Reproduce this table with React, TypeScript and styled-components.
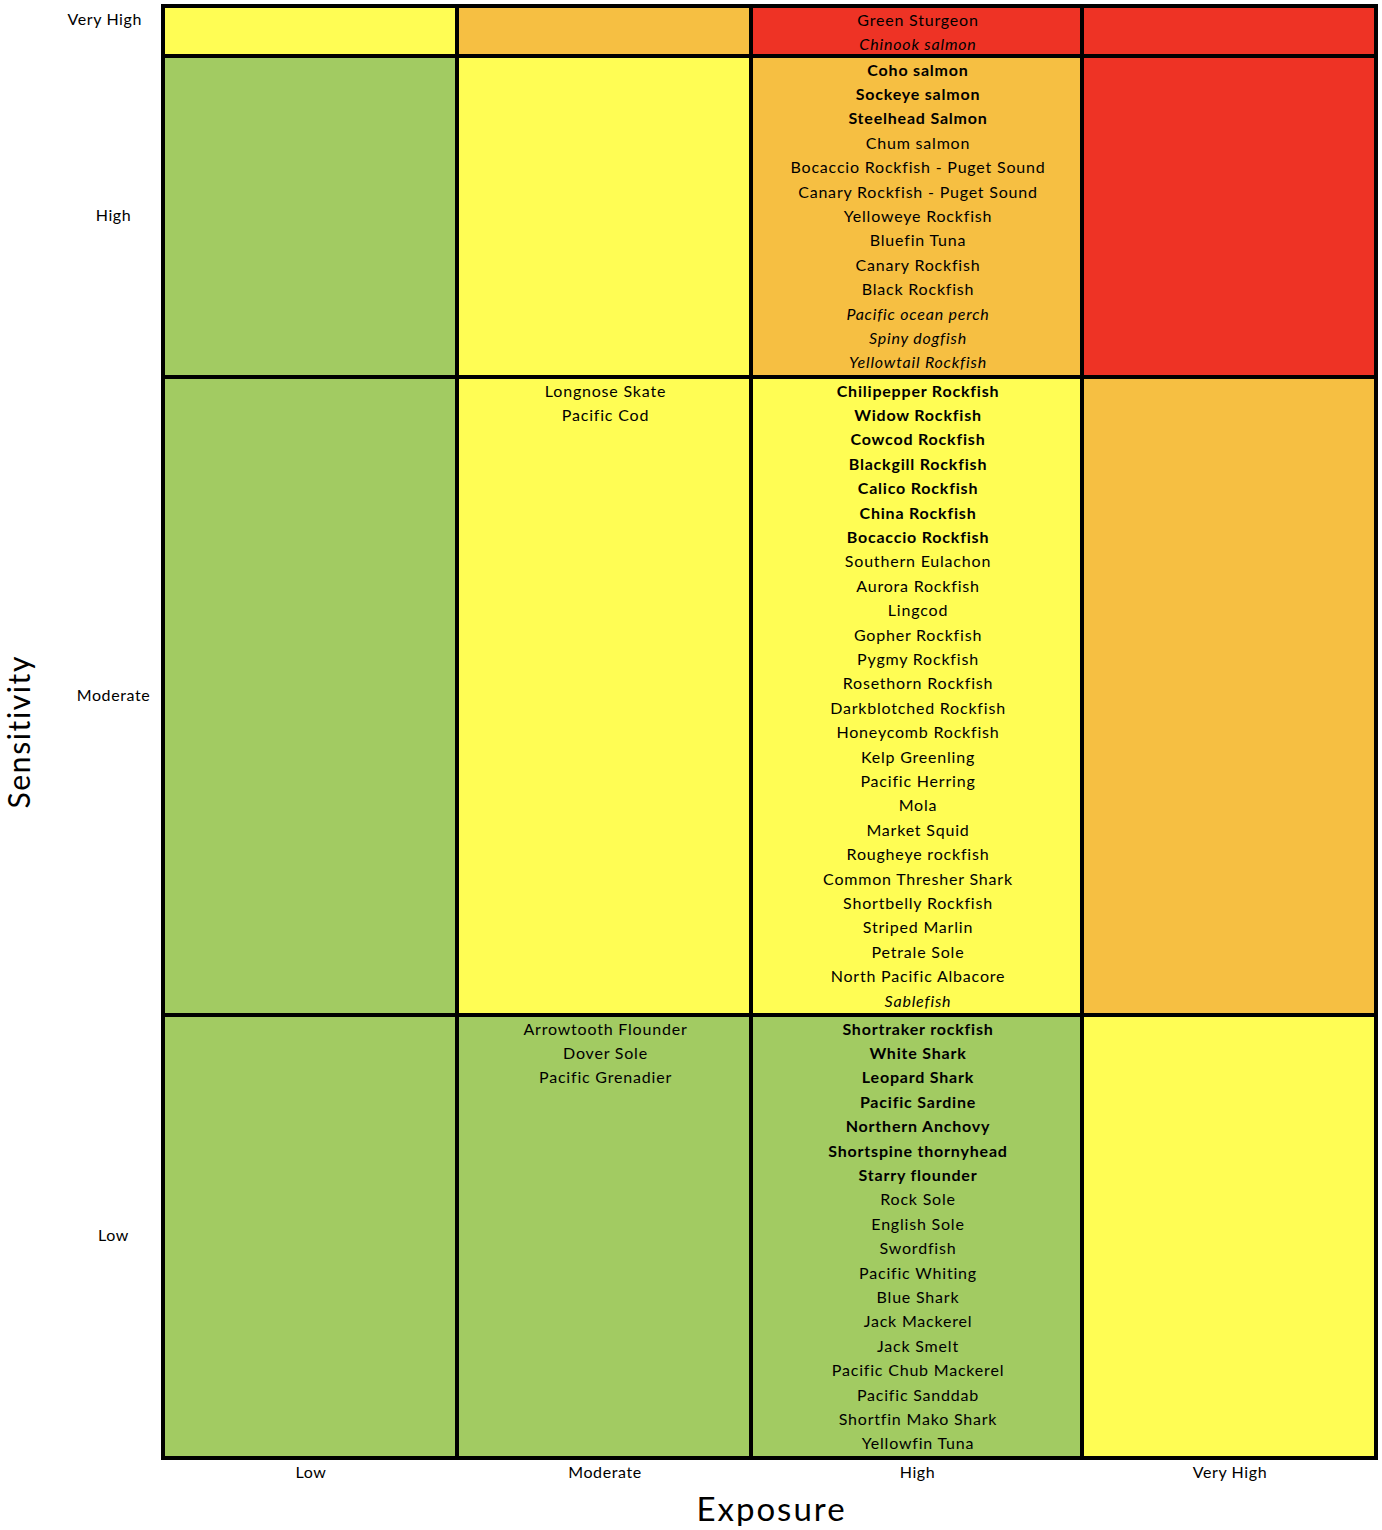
import React from 'react';
import styled, { createGlobalStyle } from 'styled-components';

const GlobalStyle = createGlobalStyle`
  body {
    margin: 0;
    background: #ffffff;
    font-family: Lato, "Liberation Sans", sans-serif;
    color: #000;
  }
`;

const COLS = '290px 290px 327px 290px';
const ROWS = '46px 317px 634px 439px';

const colors: Record<string, string> = {
  y: '#FFFD54',
  o: '#F6BF42',
  r: '#EE3325',
  g: '#A2CB62',
};

type Kind = 'n' | 'b' | 'i';
type Fish = [string, Kind];

const Page = styled.div`
  padding-top: 4px;
  width: 1382px;
`;

const ChartRow = styled.div`
  display: flex;
`;

const YTitle = styled.div`
  width: 36px;
  display: flex;
  align-items: center;
  justify-content: center;
`;

const YTitleText = styled.span`
  writing-mode: vertical-rl;
  transform: rotate(180deg);
  font-size: 30px;
  letter-spacing: 1.6px;
  line-height: 1;
`;

const YLabels = styled.div`
  width: 125px;
  padding: 3px 0 4px 30px;
  box-sizing: border-box;
  display: grid;
  grid-template-rows: ${ROWS};
  row-gap: 4px;
`;

const YLabel = styled.div<{ $top?: boolean }>`
  display: flex;
  align-items: ${(p) => (p.$top ? 'flex-start' : 'center')};
  justify-content: ${(p) => (p.$top ? 'flex-end' : 'center')};
  padding-right: ${(p) => (p.$top ? '19px' : '0')};
  font-size: 16px;
  letter-spacing: 0.6px;
  line-height: 24.4px;
`;

const Matrix = styled.div`
  display: grid;
  grid-template-columns: ${COLS};
  grid-template-rows: ${ROWS};
  gap: 4px;
  padding: 4px;
  background: #000;
`;

const Cell = styled.div<{ $bg: string }>`
  background: ${(p) => p.$bg};
  display: flex;
  flex-direction: column;
  align-items: center;
  padding-left: 3px;
  margin-top: -0.5px;
`;

const Name = styled.div<{ $kind: Kind }>`
  font-size: 16px;
  line-height: 24.4px;
  letter-spacing: 0.8px;
  white-space: nowrap;
  font-weight: ${(p) => (p.$kind === 'b' ? 700 : 400)};
  font-style: ${(p) => (p.$kind === 'i' ? 'italic' : 'normal')};
`;

const XLabels = styled.div`
  margin-left: 161px;
  padding: 0 4px;
  display: grid;
  grid-template-columns: ${COLS};
  column-gap: 4px;
`;

const XLabel = styled.div`
  text-align: center;
  padding-left: 2px;
  font-size: 16px;
  letter-spacing: 0.6px;
  line-height: 24px;
`;

const XTitle = styled.div`
  margin-left: 161px;
  width: 1217px;
  margin-top: 6px;
  padding-left: 4px;
  box-sizing: border-box;
  text-align: center;
  font-size: 33px;
  letter-spacing: 2px;
  line-height: 36px;
`;

const n = (s: string): Fish => [s, 'n'];
const b = (s: string): Fish => [s, 'b'];
const i = (s: string): Fish => [s, 'i'];

const cells: { bg: string; fish: Fish[] }[][] = [
  [
    { bg: 'y', fish: [] },
    { bg: 'o', fish: [] },
    { bg: 'r', fish: [n('Green Sturgeon'), i('Chinook salmon')] },
    { bg: 'r', fish: [] },
  ],
  [
    { bg: 'g', fish: [] },
    { bg: 'y', fish: [] },
    {
      bg: 'o',
      fish: [
        b('Coho salmon'),
        b('Sockeye salmon'),
        b('Steelhead Salmon'),
        n('Chum salmon'),
        n('Bocaccio Rockfish - Puget Sound'),
        n('Canary Rockfish - Puget Sound'),
        n('Yelloweye Rockfish'),
        n('Bluefin Tuna'),
        n('Canary Rockfish'),
        n('Black Rockfish'),
        i('Pacific ocean perch'),
        i('Spiny dogfish'),
        i('Yellowtail Rockfish'),
      ],
    },
    { bg: 'r', fish: [] },
  ],
  [
    { bg: 'g', fish: [] },
    { bg: 'y', fish: [n('Longnose Skate'), n('Pacific Cod')] },
    {
      bg: 'y',
      fish: [
        b('Chilipepper Rockfish'),
        b('Widow Rockfish'),
        b('Cowcod Rockfish'),
        b('Blackgill Rockfish'),
        b('Calico Rockfish'),
        b('China Rockfish'),
        b('Bocaccio Rockfish'),
        n('Southern Eulachon'),
        n('Aurora Rockfish'),
        n('Lingcod'),
        n('Gopher Rockfish'),
        n('Pygmy Rockfish'),
        n('Rosethorn Rockfish'),
        n('Darkblotched Rockfish'),
        n('Honeycomb Rockfish'),
        n('Kelp Greenling'),
        n('Pacific Herring'),
        n('Mola'),
        n('Market Squid'),
        n('Rougheye rockfish'),
        n('Common Thresher Shark'),
        n('Shortbelly Rockfish'),
        n('Striped Marlin'),
        n('Petrale Sole'),
        n('North Pacific Albacore'),
        i('Sablefish'),
      ],
    },
    { bg: 'o', fish: [] },
  ],
  [
    { bg: 'g', fish: [] },
    { bg: 'g', fish: [n('Arrowtooth Flounder'), n('Dover Sole'), n('Pacific Grenadier')] },
    {
      bg: 'g',
      fish: [
        b('Shortraker rockfish'),
        b('White Shark'),
        b('Leopard Shark'),
        b('Pacific Sardine'),
        b('Northern Anchovy'),
        b('Shortspine thornyhead'),
        b('Starry flounder'),
        n('Rock Sole'),
        n('English Sole'),
        n('Swordfish'),
        n('Pacific Whiting'),
        n('Blue Shark'),
        n('Jack Mackerel'),
        n('Jack Smelt'),
        n('Pacific Chub Mackerel'),
        n('Pacific Sanddab'),
        n('Shortfin Mako Shark'),
        n('Yellowfin Tuna'),
      ],
    },
    { bg: 'y', fish: [] },
  ],
];

const levels = ['Very High', 'High', 'Moderate', 'Low'];
const exposure = ['Low', 'Moderate', 'High', 'Very High'];

export default function App() {
  return (
    <Page>
      <GlobalStyle />
      <ChartRow>
        <YTitle>
          <YTitleText>Sensitivity</YTitleText>
        </YTitle>
        <YLabels>
          {levels.map((l, idx) => (
            <YLabel key={l} $top={idx === 0}>
              {l}
            </YLabel>
          ))}
        </YLabels>
        <Matrix>
          {cells.flat().map((c, idx) => (
            <Cell key={idx} $bg={colors[c.bg]}>
              {c.fish.map(([name, kind]) => (
                <Name key={name} $kind={kind}>
                  {name}
                </Name>
              ))}
            </Cell>
          ))}
        </Matrix>
      </ChartRow>
      <XLabels>
        {exposure.map((e) => (
          <XLabel key={e}>{e}</XLabel>
        ))}
      </XLabels>
      <XTitle>Exposure</XTitle>
    </Page>
  );
}
